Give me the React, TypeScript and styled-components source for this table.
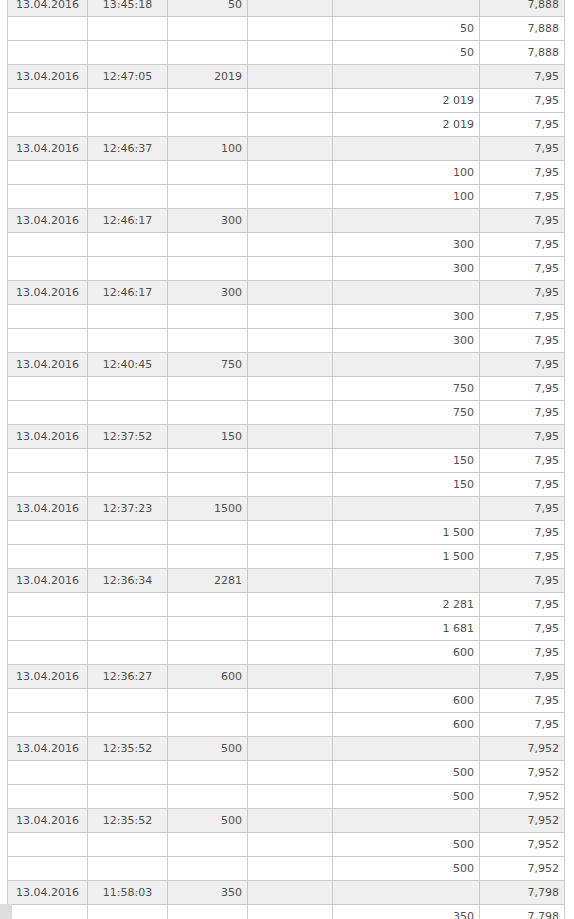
import { createGlobalStyle } from "styled-components";
import styled from "styled-components";

type RowType = {
    date?: string,
    time?: string,
    qty?: string,
    amount?: string,
    price: string,
    head?: boolean,
}

const groups: { date: string, time: string, qty: string, price: string, parts: string[] }[] = [
    { date: "13.04.2016", time: "13:45:18", qty: "50", price: "7,888", parts: ["50", "50"] },
    { date: "13.04.2016", time: "12:47:05", qty: "2019", price: "7,95", parts: ["2 019", "2 019"] },
    { date: "13.04.2016", time: "12:46:37", qty: "100", price: "7,95", parts: ["100", "100"] },
    { date: "13.04.2016", time: "12:46:17", qty: "300", price: "7,95", parts: ["300", "300"] },
    { date: "13.04.2016", time: "12:46:17", qty: "300", price: "7,95", parts: ["300", "300"] },
    { date: "13.04.2016", time: "12:40:45", qty: "750", price: "7,95", parts: ["750", "750"] },
    { date: "13.04.2016", time: "12:37:52", qty: "150", price: "7,95", parts: ["150", "150"] },
    { date: "13.04.2016", time: "12:37:23", qty: "1500", price: "7,95", parts: ["1 500", "1 500"] },
    { date: "13.04.2016", time: "12:36:34", qty: "2281", price: "7,95", parts: ["2 281", "1 681", "600"] },
    { date: "13.04.2016", time: "12:36:27", qty: "600", price: "7,95", parts: ["600", "600"] },
    { date: "13.04.2016", time: "12:35:52", qty: "500", price: "7,952", parts: ["500", "500"] },
    { date: "13.04.2016", time: "12:35:52", qty: "500", price: "7,952", parts: ["500", "500"] },
    { date: "13.04.2016", time: "11:58:03", qty: "350", price: "7,798", parts: ["350", "350"] },
];

const rows: RowType[] = groups.flatMap((g) => [
    { date: g.date, time: g.time, qty: g.qty, price: g.price, head: true },
    ...g.parts.map((p) => ({ amount: p, price: g.price })),
]);

// column widths, left to right
const widths = [80, 80, 80, 85, 147, 85];

const GlobalStyle = createGlobalStyle`
    html, body {
        margin: 0;
        padding: 0;
        background: #ffffff;
        overflow: hidden;
    }
`;

export default function App() {
    return (
        <>
            <GlobalStyle />
            <Page>
                <Table>
                    <colgroup>
                        {widths.map((w, i) => <Col key={i} $w={w} />)}
                    </colgroup>
                    <tbody>
                        {rows.map((r, i) => (
                            <Row key={i} $head={!!r.head}>
                                <Cell $align="center">{r.date ?? ""}</Cell>
                                <Cell $align="center">{r.time ?? ""}</Cell>
                                <Cell $align="right">{r.qty ?? ""}</Cell>
                                <Cell $align="right"></Cell>
                                <Cell $align="right">{r.amount ?? ""}</Cell>
                                <Cell $align="right">{r.price}</Cell>
                            </Row>
                        ))}
                    </tbody>
                </Table>
            </Page>
            <ScrollNub />
        </>
    );
}

const Page = styled.div`
    height: 919px;
    overflow: hidden;
    padding-left: 7px;
`;

const Table = styled.table`
    margin-top: -8px;
    border-collapse: collapse;
    table-layout: fixed;
    width: 558px;
    font-family: "DejaVu Sans", Verdana, sans-serif;
    font-size: 11px;
    color: #505050;
`;

const Col = styled.col<{ $w: number }>`
    width: ${(p) => p.$w}px;
`;

const Row = styled.tr<{ $head: boolean }>`
    background: ${(p) => (p.$head ? "#efefef" : "#ffffff")};
`;

const Cell = styled.td<{ $align: "center" | "right" }>`
    height: 23px;
    padding: 0 5px;
    border: 1px solid #cbcbcb;
    text-align: ${(p) => p.$align};
    vertical-align: middle;
    white-space: nowrap;
    overflow: hidden;
`;

const ScrollNub = styled.div`
    position: fixed;
    left: 0;
    bottom: 0;
    width: 12px;
    height: 15px;
    background: #dcdcdc;
`;
